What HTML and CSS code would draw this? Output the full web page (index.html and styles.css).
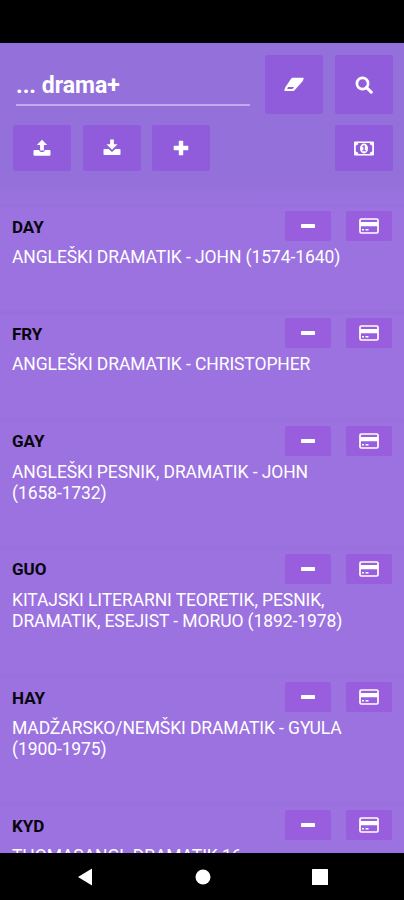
FILE: index.html
```html
<!DOCTYPE html>
<html lang="sl">
<head>
<meta charset="utf-8">
<title>Slovar</title>
<link rel="stylesheet" href="styles.css">
</head>
<body>
<svg class="defs" aria-hidden="true">
  <symbol id="card" viewBox="0 0 20 16"><rect x="1" y="1" width="18" height="14" rx="1.3" fill="none" stroke="#fff" stroke-width="1.7"/><path d="M1 4h18v4.300H1zM3 11h2v1.500H3zM6.500 11h3v1.500h-3z" fill="#fff"/></symbol>
  <symbol id="minus" viewBox="0 0 14 4"><rect width="14" height="4" rx=".7" fill="#fff"/></symbol>
</svg>
<div class="status"></div>
<main class="app">
  <header class="top">
    <div class="search">
      <div class="field"><span class="query">... drama+</span></div>
      <button class="btn tall"><svg width="20" height="15" viewBox="0 0 20 15"><path fill="#fff" fill-rule="evenodd" d="M8.600.7h10.400q1.100 0 .6 1.100l-1 2.400-8.300 9.200q-.5.700-1.300.7H1.500q-1.500 0-1-1.500l.8-2.300 6-8.900Q7.800.7 8.600.7ZM4 10 3.200 12h5.200l1.700-2z"/></svg></button>
      <button class="btn tall"><svg width="18" height="18" viewBox="0 0 18 18"><g fill="none" stroke="#fff" stroke-width="2.700"><circle cx="7.500" cy="7.500" r="5.600"/><path d="m11.500 11.500 4.700 4.700" stroke-width="3.100" stroke-linecap="round"/></g></svg></button>
    </div>
    <div class="tools">
      <button class="btn"><svg width="18" height="18" viewBox="0 0 18 18"><path fill="#fff" d="M9 .8 14.200 6h-3.300v5.500H7.100V6H3.800zM1.500 11h4.600c.3 1.400 1.300 2 2.900 2s2.600-.6 2.900-2h4.600q1 0 1 1v3.700q0 1-1 1h-15q-1 0-1-1V12q0-1 1-1z"/></svg></button>
      <button class="btn"><svg width="18" height="18" viewBox="0 0 18 18"><path fill="#fff" d="M7.100.5h3.800v4.800h3.600L9 10.800 3.500 5.300h3.600zM1.500 10h4l3.500 3 3.500-3h4q1 0 1 1v4q0 1-1 1h-15q-1 0-1-1v-4q0-1 1-1z"/></svg></button>
      <button class="btn"><svg width="16" height="16" viewBox="0 0 16 16"><path fill="#fff" d="M6.400.7h3.200q.6 0 .6.600v4.500h4.500q.6 0 .6.600v3.200q0 .6-.6.600h-4.500v4.500q0 .6-.6.600H6.400q-.6 0-.6-.6v-4.500H1.300q-.6 0-.6-.6V6.400q0-.6.6-.6h4.500V1.300q0-.6.6-.6z"/></svg></button>
      <button class="btn last"><svg width="20" height="15" viewBox="0 0 20 15"><path fill="#fff" fill-rule="evenodd" d="M1 .5h18q1 0 1 1v12q0 1-1 1H1q-1 0-1-1v-12q0-1 1-1ZM4.300 2q0 2.200-2.500 2.500v6q2.500.3 2.500 2.500h11.400q0-2.200 2.500-2.500v-6Q15.700 4.200 15.700 2Z"/><ellipse cx="10" cy="7.500" rx="4" ry="4.900" fill="#fff"/><path fill="#905cdc" d="m8.100 5.600 1.500-1.400h1.200v5h1.300v1.100H8.200V9.200h1.200V5.700l-.6.600z"/></svg></button>
    </div>
  </header>
  <section class="list">
    <article class="row"><div class="head"><h2>DAY</h2><button class="small"><svg width="14" height="4"><use href="#minus"/></svg></button><button class="small"><svg width="20" height="16"><use href="#card"/></svg></button></div><p>ANGLEŠKI DRAMATIK - JOHN (1574-1640)</p></article>
    <article class="row"><div class="head"><h2>FRY</h2><button class="small"><svg width="14" height="4"><use href="#minus"/></svg></button><button class="small"><svg width="20" height="16"><use href="#card"/></svg></button></div><p>ANGLEŠKI DRAMATIK - CHRISTOPHER</p></article>
    <article class="row"><div class="head"><h2>GAY</h2><button class="small"><svg width="14" height="4"><use href="#minus"/></svg></button><button class="small"><svg width="20" height="16"><use href="#card"/></svg></button></div><p>ANGLEŠKI PESNIK, DRAMATIK - JOHN<br>(1658-1732)</p></article>
    <article class="row"><div class="head"><h2>GUO</h2><button class="small"><svg width="14" height="4"><use href="#minus"/></svg></button><button class="small"><svg width="20" height="16"><use href="#card"/></svg></button></div><p>KITAJSKI LITERARNI TEORETIK, PESNIK,<br>DRAMATIK, ESEJIST - MORUO (1892-1978)</p></article>
    <article class="row"><div class="head"><h2>HAY</h2><button class="small"><svg width="14" height="4"><use href="#minus"/></svg></button><button class="small"><svg width="20" height="16"><use href="#card"/></svg></button></div><p>MADŽARSKO/NEMŠKI DRAMATIK - GYULA<br>(1900-1975)</p></article>
    <article class="row"><div class="head"><h2>KYD</h2><button class="small"><svg width="14" height="4"><use href="#minus"/></svg></button><button class="small"><svg width="20" height="16"><use href="#card"/></svg></button></div><p>THOMASANGL DRAMATIK 16</p></article>
  </section>
</main>
<nav class="nav">
  <svg width="14" height="18" viewBox="0 0 14 18"><path fill="#fff" d="M14 .5v17L0 9z"/></svg>
  <svg width="16" height="16" viewBox="0 0 16 16"><circle cx="8" cy="8" r="7.500" fill="#fff"/></svg>
  <svg width="16" height="16" viewBox="0 0 16 16"><rect width="16" height="16" rx=".5" fill="#fff"/></svg>
</nav>
</body>
</html>
```
FILE: styles.css
```css
* { box-sizing: border-box; }
body {
  margin: 0;
  width: 404px;
  height: 900px;
  display: flex;
  flex-direction: column;
  overflow: hidden;
  background: #000;
  color: #fff;
  font-family: Roboto, sans-serif;
}
.defs { display: none; }
.status { height: 43px; flex: none; }
.app {
  height: 810px;
  flex: none;
  overflow: hidden;
  background: #9b72df;
}
.top {
  height: 162px;
  padding: 12px 11px 0 13px;
  background: linear-gradient(#9470db 138px, #9b72df);
}
.search { display: flex; height: 59px; }
.field {
  width: 234px;
  height: 51px;
  margin: 0 15px 0 3px;
  border-bottom: 2px solid #c4a9ee;
}
.query {
  display: block;
  padding-top: 16px;
  font-size: 23px;
  line-height: 30px;
  font-weight: 700;
}
button {
  display: flex;
  align-items: center;
  justify-content: center;
  flex: none;
  border: 0;
  padding: 0;
  border-radius: 2px;
}
.btn {
  width: 58px;
  height: 46px;
  background: #905cdc;
}
.tall { height: 59px; }
.tall + .tall { margin-left: 12px; }
.tools { display: flex; gap: 11.5px; margin-top: 11px; }
.last { margin-left: auto; }
.row {
  height: 107.3px;
  padding: 6px 12px 0;
  background: linear-gradient(#976edb 0, #9b72df 4px, #9b72df 97%, #986fdc);
}
.row:nth-child(n + 3) { height: 128.3px; }
.head { display: flex; align-items: center; height: 30px; }
h2 {
  flex: 1;
  margin: 0;
  padding-top: 1px;
  color: #08050e;
  font-size: 17px;
  line-height: 30px;
  font-weight: 700;
}
.small {
  width: 46px;
  height: 30px;
  background: #995edd;
}
.small + .small { margin-left: 15px; }
p {
  margin: 6px 0 0;
  font-size: 17.5px;
  letter-spacing: -0.09px;
  line-height: 21px;
  white-space: nowrap;
}
.nav {
  height: 47px;
  display: grid;
  grid-template-columns: 118px 118px 116px;
  justify-content: center;
  align-items: center;
  justify-items: center;
}
```
